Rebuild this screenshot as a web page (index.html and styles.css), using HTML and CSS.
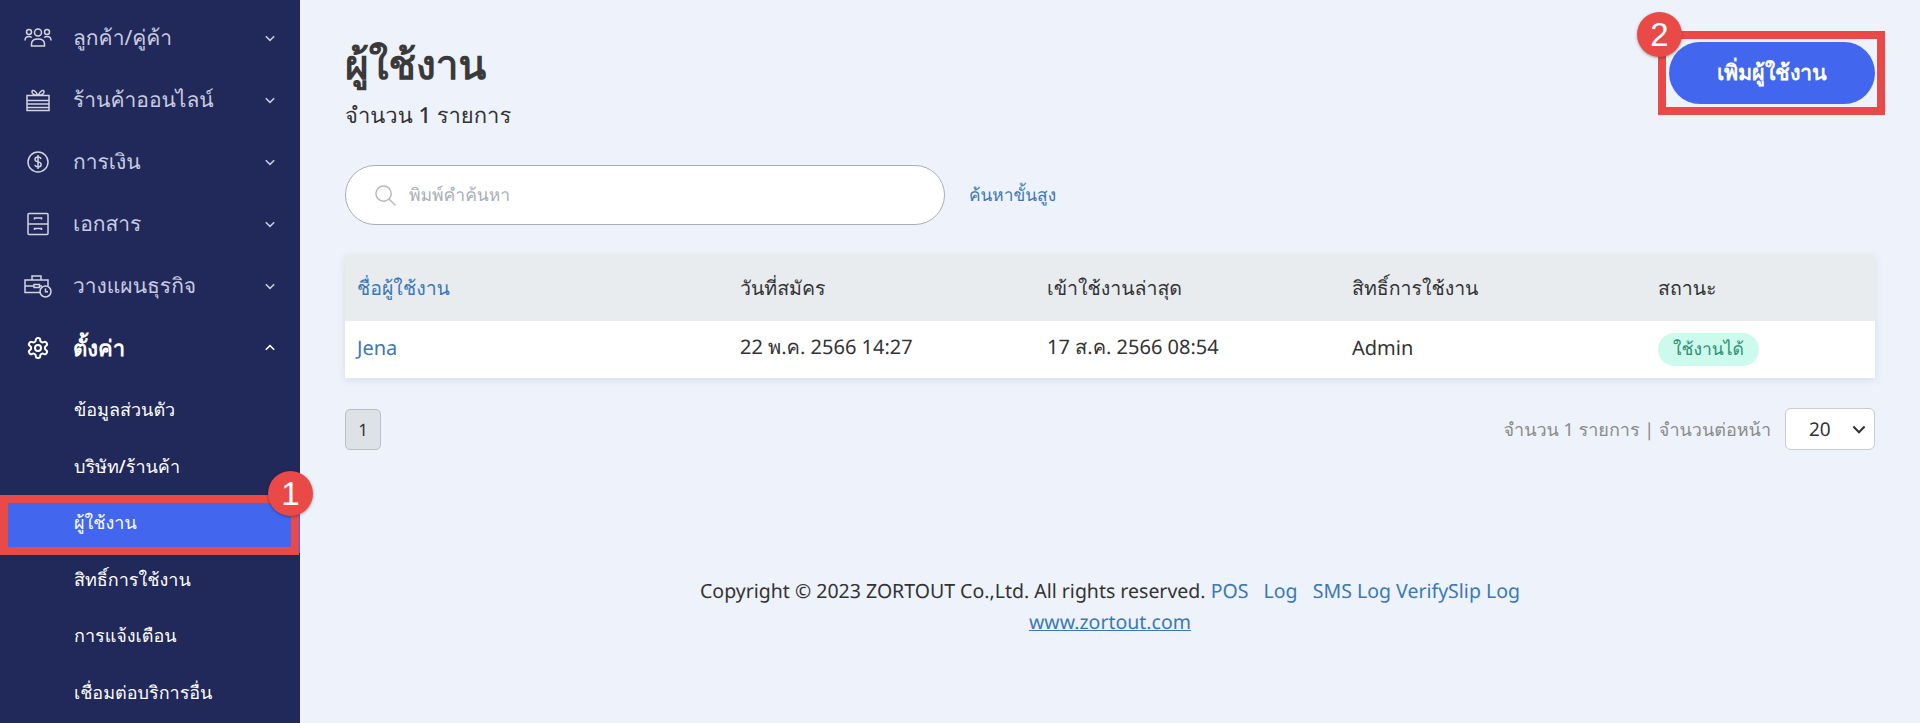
FILE: index.html
```html
<!DOCTYPE html>
<html lang="th">
<head>
    <meta charset="UTF-8">
    <title>ผู้ใช้งาน</title>
    <link rel="stylesheet" href="styles.css">
</head>
<body>
    <div class="sidebar">
        <div class="menu-item">
            <svg class="menu-icon" viewBox="0 0 28 24"><circle cx="14" cy="6.500" r="3.500"/><circle cx="5" cy="6" r="2.500"/><circle cx="23" cy="6" r="2.500"/><path d="M7.500 20v-2c0-3 2.500-5 6.500-5s6.500 2 6.500 5v2zM1 14.500c0-2.500 1.500-4 4-4 1 0 2 .3 2.800 1M27 14.500c0-2.500-1.500-4-4-4-1 0-2 .3-2.800 1"/></svg>
            <span>ลูกค้า/คู่ค้า</span>
            <svg class="chev" viewBox="0 0 10 10"><path d="M1.500 3.500L5 7l3.500-3.500"/></svg>
        </div>
        <div class="menu-item">
            <svg class="menu-icon" viewBox="0 0 28 24"><path d="M3 7.500h22v15H3zM3 12.500h22M3 16h22M3 19.500h22M14 7.500C10 7 7.500 5.500 8 3.500c.5-2 3-1.500 6 4M14 7.500c4-.5 6.500-2 6-4-.5-2-3-1.500-6 4"/></svg>
            <span>ร้านค้าออนไลน์</span>
            <svg class="chev" viewBox="0 0 10 10"><path d="M1.500 3.500L5 7l3.500-3.500"/></svg>
        </div>
        <div class="menu-item">
            <svg class="menu-icon" viewBox="0 0 28 24"><circle cx="14" cy="12" r="10"/><path d="M17 9c-.3-1.300-1.500-2-3-2-1.800 0-3 1-3 2.400 0 3.200 6.200 1.800 6.200 5 0 1.500-1.400 2.500-3.200 2.500-1.600 0-2.800-.7-3.200-2M14 5v14"/></svg>
            <span>การเงิน</span>
            <svg class="chev" viewBox="0 0 10 10"><path d="M1.500 3.500L5 7l3.500-3.500"/></svg>
        </div>
        <div class="menu-item">
            <svg class="menu-icon" viewBox="0 0 28 24"><rect x="4" y="1.500" width="20" height="21" rx="1"/><path d="M4 12h20M10.500 7.500V6h7v1.500M10.500 18v-1.500h7V18"/></svg>
            <span>เอกสาร</span>
            <svg class="chev" viewBox="0 0 10 10"><path d="M1.500 3.500L5 7l3.500-3.500"/></svg>
        </div>
        <div class="menu-item">
            <svg class="menu-icon" viewBox="0 0 28 24"><path d="M16.500 18.500H1V6h23v6M8 6V2h9v4M1 12h9M15.500 12H18M10 10.500h5.500v3H10z"/><circle cx="21.500" cy="17.500" r="5.500"/><path d="M21.500 14.500v3.300h2.500"/></svg>
            <span>วางแผนธุรกิจ</span>
            <svg class="chev" viewBox="0 0 10 10"><path d="M1.500 3.500L5 7l3.500-3.500"/></svg>
        </div>
        <div class="menu-item open">
            <svg class="menu-icon gear" viewBox="0 0 24 24"><path d="M12.220 2h-.44a2 2 0 0 0-2 2v.18a2 2 0 0 1-1 1.730l-.43.25a2 2 0 0 1-2 0l-.15-.08a2 2 0 0 0-2.730.73l-.22.38a2 2 0 0 0 .73 2.730l.15.100a2 2 0 0 1 1 1.720v.51a2 2 0 0 1-1 1.740l-.15.09a2 2 0 0 0-.73 2.730l.22.38a2 2 0 0 0 2.730.73l.15-.08a2 2 0 0 1 2 0l.43.25a2 2 0 0 1 1 1.730V20a2 2 0 0 0 2 2h.44a2 2 0 0 0 2-2v-.18a2 2 0 0 1 1-1.730l.43-.25a2 2 0 0 1 2 0l.15.08a2 2 0 0 0 2.730-.73l.22-.39a2 2 0 0 0-.73-2.730l-.15-.08a2 2 0 0 1-1-1.740v-.5a2 2 0 0 1 1-1.740l.15-.09a2 2 0 0 0 .73-2.730l-.22-.38a2 2 0 0 0-2.730-.73l-.15.08a2 2 0 0 1-2 0l-.43-.25a2 2 0 0 1-1-1.730V4a2 2 0 0 0-2-2z"/><circle cx="12" cy="12" r="3"/></svg>
            <span>ตั้งค่า</span>
            <svg class="chev" viewBox="0 0 10 10"><path d="M1.500 6.500L5 3l3.500 3.500"/></svg>
        </div>
        <div class="submenu">
            <div class="sub-item">ข้อมูลส่วนตัว</div>
            <div class="sub-item">บริษัท/ร้านค้า</div>
            <div class="sub-item active">ผู้ใช้งาน</div>
            <div class="sub-item">สิทธิ์การใช้งาน</div>
            <div class="sub-item">การแจ้งเตือน</div>
            <div class="sub-item">เชื่อมต่อบริการอื่น</div>
        </div>
        <div class="mark-box mark-side"></div>
        <div class="badge badge-side">1</div>
    </div>
    <div class="main">
        <div class="page-head">
            <div>
                <h1>ผู้ใช้งาน</h1>
                <div class="count">จำนวน 1 รายการ</div>
            </div>
            <button class="add-btn">เพิ่มผู้ใช้งาน</button>
        </div>
        <div class="mark-box mark-top"></div>
        <div class="badge badge-top">2</div>
        <div class="search-row">
            <div class="search-box">
                <svg class="search-icon" viewBox="0 0 24 24"><circle cx="10" cy="10" r="8"/><path d="M16 16l6.500 6.500"/></svg>
                <span>พิมพ์คำค้นหา</span>
            </div>
            <a href="#" class="adv-link">ค้นหาขั้นสูง</a>
        </div>
        <table>
            <thead>
                <tr>
                    <th class="col-name sort">ชื่อผู้ใช้งาน</th>
                    <th class="col-date">วันที่สมัคร</th>
                    <th class="col-last">เข้าใช้งานล่าสุด</th>
                    <th class="col-role">สิทธิ์การใช้งาน</th>
                    <th>สถานะ</th>
                </tr>
            </thead>
            <tbody>
                <tr>
                    <td class="sort">Jena</td>
                    <td>22 พ.ค. 2566 14:27</td>
                    <td>17 ส.ค. 2566 08:54</td>
                    <td>Admin</td>
                    <td><span class="status">ใช้งานได้</span></td>
                </tr>
            </tbody>
        </table>
        <div class="pager-row">
            <div class="page-num">1</div>
            <div class="per-page">
                <span>จำนวน 1 รายการ | จำนวนต่อหน้า</span>
                <div class="per-select">20<svg viewBox="0 0 10 10"><path d="M1.500 3.500L5 7l3.500-3.500"/></svg></div>
            </div>
        </div>
        <footer>
            <p>Copyright © 2023 ZORTOUT Co.,Ltd. All rights reserved. <a href="#">POS</a> &nbsp; <a href="#">Log</a> &nbsp; <a href="#">SMS Log</a> <a href="#">VerifySlip Log</a></p>
            <p><a href="#" class="site">www.zortout.com</a></p>
        </footer>
    </div>
</body>
</html>
```

FILE: styles.css
```css
* {
    box-sizing: border-box;
}

html, body {
    height: 723px;
    overflow: hidden;
}

body {
    margin: 0;
    display: flex;
    font-family: "Noto Sans", "Noto Sans CJK SC", sans-serif;
    text-rendering: geometricPrecision;
    background-color: #eef2fa;
    color: #333;
}

.sidebar {
    position: relative;
    width: 300px;
    flex-shrink: 0;
    background-color: #21285a;
    color: #fff;
    padding-top: 7px;
}

.menu-item {
    display: flex;
    align-items: center;
    height: 62px;
    padding: 0 24px;
    font-size: 21px;
    color: #c9cde0;
}

.menu-item span {
    flex: 1;
    margin-left: 21px;
}

.menu-item.open {
    color: #fff;
    font-size: 22px;
    font-weight: 700;
}

.menu-icon {
    width: 28px;
    height: 24px;
    fill: none;
    stroke: #d3d5de;
    stroke-width: 1.500;
}

.menu-icon.gear {
    stroke: #fff;
    stroke-width: 2;
}

.chev {
    width: 12px;
    height: 12px;
    fill: none;
    stroke: currentColor;
    stroke-width: 1.300;
}

.submenu {
    margin-top: 4px;
}

.sub-item {
    display: flex;
    align-items: center;
    height: 56.500px;
    padding: 0 0 3px 74px;
    font-size: 18px;
    font-weight: 500;
}

.sub-item.active {
    background-color: #4267ee;
}

.mark-box {
    position: absolute;
    border: 8px solid #ea4a47;
    pointer-events: none;
}

.mark-side {
    left: 0;
    top: 495px;
    width: 299px;
    height: 60px;
}

.mark-top {
    left: 1358px;
    top: 31px;
    width: 227px;
    height: 84px;
}

.badge {
    position: absolute;
    width: 45px;
    height: 45px;
    border-radius: 50%;
    background-color: #ea4a47;
    color: #fff;
    font-family: "Liberation Sans", sans-serif;
    font-size: 33px;
    display: flex;
    align-items: center;
    justify-content: center;
    box-shadow: 0 1px 3px rgba(0,0,0,0.35);
}

.badge-side {
    left: 268px;
    top: 471px;
}

.badge-top {
    left: 1337px;
    top: 12px;
}

.main {
    position: relative;
    flex: 1;
    padding: 0 45px;
}

.page-head {
    display: flex;
    justify-content: space-between;
    padding-top: 34px;
    height: 165px;
}

h1 {
    margin: 0;
    font-size: 40.500px;
    line-height: 60px;
    font-weight: 700;
    color: #3a3a3a;
}

.count {
    margin-top: 4px;
    font-size: 22px;
    font-weight: 500;
}

.add-btn {
    width: 206px;
    height: 62px;
    margin-top: 8px;
    padding-bottom: 3px;
    border: 0;
    border-radius: 31px;
    background-color: #4267ee;
    color: #fff;
    font-family: inherit;
    font-size: 21.500px;
    font-weight: 600;
}

.search-row {
    display: flex;
    align-items: center;
    gap: 24px;
}

.search-box {
    display: flex;
    align-items: center;
    width: 600px;
    height: 60px;
    padding-left: 28px;
    background-color: #fff;
    border: 1px solid #a9adb4;
    border-radius: 30px;
    font-size: 17.500px;
    color: #a9aeb5;
}

.search-icon {
    width: 23px;
    height: 23px;
    margin-right: 12px;
    fill: none;
    stroke: #b4b8be;
    stroke-width: 1.500;
}

.adv-link {
    color: #3b78b5;
    font-size: 17.300px;
    text-decoration: none;
}

table {
    width: 100%;
    table-layout: fixed;
    margin-top: 30px;
    border-collapse: collapse;
    background-color: #fff;
    box-shadow: 0 2px 8px rgba(60,80,160,0.12);
    font-size: 20px;
}

th {
    height: 66px;
    padding: 0 12px;
    text-align: left;
    font-size: 19.500px;
    font-weight: 500;
    background-color: #e8ecef;
}

td {
    height: 57px;
    padding: 0 12px 5px;
}

.col-name {
    width: 383px;
}

.col-date {
    width: 307px;
}

.col-last {
    width: 305px;
}

.col-role {
    width: 306px;
}

.sort {
    color: #3b78b5;
}

.status {
    display: inline-block;
    width: 101px;
    height: 33px;
    line-height: 33px;
    text-align: center;
    border-radius: 17px;
    background-color: #ccfbee;
    color: #2f8f70;
    font-size: 17.500px;
    vertical-align: middle;
    margin-top: 5px;
}

.pager-row {
    display: flex;
    justify-content: space-between;
    align-items: center;
    margin-top: 30px;
}

.page-num {
    width: 36px;
    height: 41px;
    display: flex;
    align-items: center;
    justify-content: center;
    border: 1px solid #b9bfc4;
    border-radius: 5px;
    background-color: #dee2e6;
    font-size: 17px;
}

.per-page {
    display: flex;
    align-items: center;
    gap: 14px;
    font-size: 18px;
    color: #8a8a8a;
}

.per-select {
    display: flex;
    align-items: center;
    justify-content: space-between;
    width: 90px;
    height: 42px;
    padding: 0 7px 0 23px;
    background-color: #fff;
    border: 1px solid #c8ccd0;
    border-radius: 6px;
    color: #333;
    font-size: 19px;
}

.per-select svg {
    width: 16px;
    height: 16px;
    fill: none;
    stroke: #333;
    stroke-width: 1.300;
}

footer {
    margin-top: 125px;
    text-align: center;
    font-size: 19.500px;
}

footer p {
    margin: 0;
    line-height: 31px;
}

footer a {
    color: #3b78b5;
    text-decoration: none;
}

footer .site {
    text-decoration: underline;
}
```
